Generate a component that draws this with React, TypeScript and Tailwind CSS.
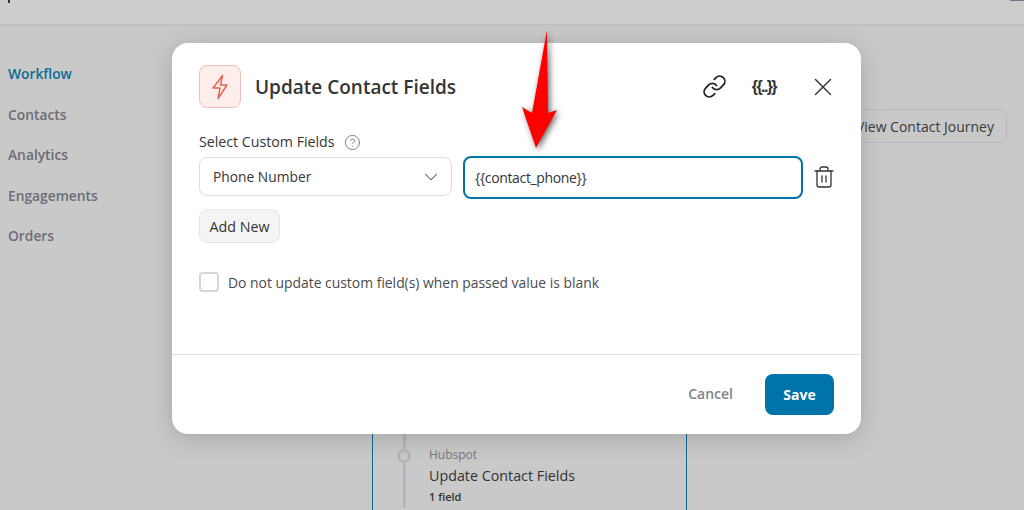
import { ChevronDown, CircleHelp, Link, Trash2, X } from "lucide-react";

const navItems = ["Contacts", "Analytics", "Engagements", "Orders"];

function PageBehind() {
  return (
    <div className="flex h-full flex-col">
      <div className="flex h-6 shrink-0 justify-between bg-[#cdcdcd] shadow-[0_1px_3px_rgba(0,0,0,0.08)]">
        <div className="ml-[8px] h-[3px] w-[2px] bg-[#333333]" />
        <div className="h-px w-[14px] bg-[#77777f]" />
      </div>
      <div className="flex min-h-0 flex-1">
        <nav className="flex w-[172px] shrink-0 flex-col gap-[20px] pl-2 pt-[40px] text-[13.8px] font-semibold leading-[20.5px]">
          <span className="text-[#0f6a96]">Workflow</span>
          {navItems.map((item) => (
            <span key={item} className="text-[#6c6c74]">
              {item}
            </span>
          ))}
        </nav>
        <main className="flex min-w-0 flex-1 flex-col">
          <div className="flex justify-end pr-[17px] pt-[85px]">
            <button className="h-[34px] w-[200px] rounded-lg border border-[#b8b8c0] pr-[12px] text-right text-[14px] text-[#3a3a3a]">
              View Contact Journey
            </button>
          </div>
          <div className="ml-[200px] mt-[200px] flex h-[167px] w-[315px] gap-[18px] border-x border-[#0f6a96] pl-[24px] pt-[90px]">
            <div className="flex w-[14px] shrink-0 flex-col items-center">
              <div className="h-[16px] w-[3px] bg-[#b5b5bd]" />
              <div className="h-[14px] w-[14px] rounded-full border-[3px] border-[#b5b5bd]" />
              <div className="h-[44px] w-[3px] bg-[#b5b5bd]" />
            </div>
            <div className="pt-[13px]">
              <p className="text-[12px] leading-[18px] text-[#77777f]">Hubspot</p>
              <p className="mt-[2px] text-[14.3px] font-medium leading-[20px] text-[#333333]">Update Contact Fields</p>
              <p className="mt-[2px] text-[11px] font-semibold leading-[18px] text-[#333333]">1 field</p>
            </div>
          </div>
        </main>
      </div>
    </div>
  );
}

function Modal() {
  return (
    <div className="absolute left-[172px] top-[43px] flex h-[391px] w-[689px] flex-col rounded-2xl bg-white shadow-[0_4px_24px_rgba(0,0,0,0.18)]">
      <div className="flex-1 px-[27px] pt-[22px]">
        <div className="flex items-center">
          <div className="flex h-[43px] w-[42px] items-center justify-center rounded-lg border border-[#ecbfb8] bg-[#fdeeec]">
            <svg className="h-[26px] w-[16px]" viewBox="0 0 16 26" fill="none" stroke="#e8604c" strokeWidth="1.4" strokeLinejoin="round">
              <path d="M10.5 1.5 1 14h7L6 24.5 15 11H8.5z" />
            </svg>
          </div>
          <h2 className="ml-[14px] mt-[2px] text-[19px] font-semibold text-[#353535]">Update Contact Fields</h2>
          <div className="ml-auto flex items-center">
            <Link className="h-[25px] w-[25px] text-[#1f1f1f]" strokeWidth={1.7} />
            <span
              className="ml-[25px] text-[16px] font-bold tracking-[-1.6px] text-[#333333]"
              style={{ fontFamily: '"Liberation Sans", sans-serif' }}
            >
              {"{{..}}"}
            </span>
            <X className="ml-[32px] mr-[-4px] h-[30px] w-[30px] shrink-0 text-[#333333]" strokeWidth={1.1} />
          </div>
        </div>

        <div className="mt-[24px] flex items-center text-[14.2px] font-medium leading-[20px] text-[#353535]">
          Select Custom Fields
          <CircleHelp className="ml-[9px] h-[17px] w-[17px] text-[#77777f]" strokeWidth={1.3} />
        </div>
        <div className="mt-[4px] flex items-start">
          <div className="mt-[1px] flex h-[39px] w-[253px] shrink-0 items-center justify-between rounded-lg border border-[#dedee2] pl-[13px] pr-[9px] text-[13.8px] text-[#353535]">
            <span className="pt-[2px]">Phone Number</span>
            <ChevronDown className="h-[22px] w-[22px] text-[#555555]" strokeWidth={1.1} />
          </div>
          <div className="ml-[11px] flex h-[43px] w-[340px] shrink-0 items-center rounded-lg border-2 border-[#0073aa] pl-[10px] text-[14px] tracking-[-0.35px] text-[#353535]">
            {"{{contact_phone}}"}
          </div>
          <Trash2 className="ml-[9px] mt-[9px] h-6 w-6 shrink-0 text-[#333333]" strokeWidth={1.3} />
        </div>
        <button className="mt-[10px] flex h-[34px] w-[81px] items-center justify-center rounded-lg border border-[#e6e6e8] bg-[#f4f4f5] pt-[1px] text-[14.3px] font-medium text-[#353535]">
          Add New
        </button>
        <label className="mt-[28px] flex items-center">
          <span className="h-[20px] w-[20px] rounded border-2 border-[#d5d5da] bg-white" />
          <span className="ml-[9px] pt-[2px] text-[13.9px] text-[#4a4a4f]">Do not update custom field(s) when passed value is blank</span>
        </label>
      </div>
      <div className="flex h-[80px] items-start justify-end border-t border-[#e2e2e8] pr-[27px] pt-[19px]">
        <button className="mr-[32px] mt-[10px] text-[14px] font-semibold leading-[20px] text-[#82828a]">Cancel</button>
        <button className="h-[41px] w-[69px] rounded-lg bg-[#0073aa] text-[14px] font-bold text-white">Save</button>
      </div>
    </div>
  );
}

export default function App() {
  return (
    <div
      className="relative h-[510px] w-[1024px] overflow-hidden bg-[#c9c9c9]"
      style={{ fontFamily: '"Open Sans", "Noto Sans", sans-serif' }}
    >
      <PageBehind />
      <Modal />
      {/* annotation arrow pasted on top of the screenshot */}
      <svg
        className="absolute left-[515px] top-[25px] h-[130px] w-[50px] drop-shadow-[2px_2px_3px_rgba(0,0,0,0.6)]"
        viewBox="0 0 50 130"
      >
        <polygon points="32,5 33,88 42,85 21,123 7,82 17,88" fill="#ff0000" />
      </svg>
    </div>
  );
}
